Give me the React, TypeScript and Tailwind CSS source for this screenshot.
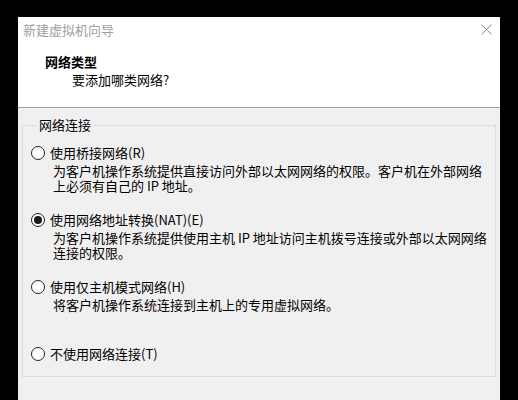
import React from "react";

type Option = {
  label: string;
  lines: string[];
  checked?: boolean;
};

const OPTIONS: Option[] = [
  {
    label: "使用桥接网络(R)",
    lines: [
      "为客户机操作系统提供直接访问外部以太网网络的权限。客户机在外部网络",
      "上必须有自己的 IP 地址。",
    ],
  },
  {
    label: "使用网络地址转换(NAT)(E)",
    lines: [
      "为客户机操作系统提供使用主机 IP 地址访问主机拨号连接或外部以太网网络",
      "连接的权限。",
    ],
    checked: true,
  },
  {
    label: "使用仅主机模式网络(H)",
    lines: ["将客户机操作系统连接到主机上的专用虚拟网络。"],
  },
  {
    label: "不使用网络连接(T)",
    lines: [],
  },
];

function Radio({ checked }: { checked?: boolean }) {
  return (
    <span className="flex h-[14px] w-[14px] shrink-0 items-center justify-center rounded-full border border-[#222] bg-white">
      {checked && <span className="h-[8px] w-[8px] rounded-full bg-[#1a1a1a]" />}
    </span>
  );
}

export default function App() {
  return (
    <div
      className="h-[400px] w-[518px] overflow-hidden bg-black pl-[18px] pt-[17px] text-[13px] leading-[15px] text-black"
      style={{ fontFamily: '"Noto Sans CJK SC", "Noto Sans", sans-serif' }}
    >
      <div className="flex h-[400px] w-[482px] flex-col bg-[#f0f0f0]">
        <div className="flex h-[24px] items-center justify-between bg-white pl-[5px] pr-[8px]">
          <span className="text-[#a0a0a0]">新建虚拟机向导</span>
          <svg width="11" height="11" viewBox="0 0 11 11" className="text-[#8a8a8a]">
            <path d="M0.5 0.5L10.5 10.5M10.5 0.5L0.5 10.5" stroke="currentColor" strokeWidth="1" />
          </svg>
        </div>

        <div className="flex h-[67px] flex-col border-b border-[#a0a0a0] bg-white pl-[27px] pt-[13px]">
          <p className="font-bold">网络类型</p>
          <p className="mt-[3px] pl-[27px]">要添加哪类网络?</p>
        </div>

        <div className="px-[4px]">
          <fieldset className="mt-[9px] border border-[#dcdcdc] pb-[15px] pl-[8px] pr-[8px]">
            <legend className="ml-[5px] px-[3px] leading-[16px]">网络连接</legend>
            <div className="mt-[12px] flex flex-col">
              {OPTIONS.map((opt, i) => (
                <div
                  key={opt.label}
                  className={i === 0 ? "" : i === 3 ? "mt-[34px]" : "mt-[19px]"}
                >
                  <div className="flex items-center gap-[5px]">
                    <Radio checked={opt.checked} />
                    <span className="whitespace-nowrap">{opt.label}</span>
                  </div>
                  {opt.lines.length > 0 && (
                    <div className="mt-[3px] pl-[22px]">
                      {opt.lines.map((line) => (
                        <p key={line} className="whitespace-nowrap">
                          {line}
                        </p>
                      ))}
                    </div>
                  )}
                </div>
              ))}
            </div>
          </fieldset>
        </div>
      </div>
    </div>
  );
}
